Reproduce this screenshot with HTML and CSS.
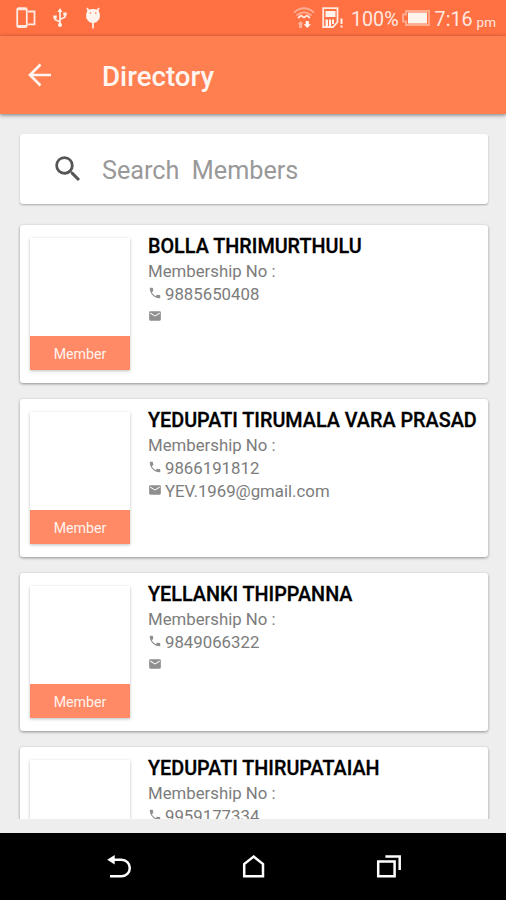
FILE: index.html
```
<!DOCTYPE html>
<html lang="en">
<head>
    <meta charset="UTF-8">
    <meta name="viewport" content="width=device-width, initial-scale=1.0">
    <title>Directory</title>
    <link rel="stylesheet" href="styles.css">
</head>
<body>

<!-- shared icons -->
<svg class="sprite" width="0" height="0">
    <symbol id="phone" viewBox="0 0 24 24">
        <path d="M6.62 10.79c1.44 2.83 3.76 5.14 6.59 6.59l2.2-2.2c.27-.27.67-.36 1.02-.24 1.12.37 2.33.57 3.57.57.55 0 1 .45 1 1V20c0 .55-.45 1-1 1C10.61 21 3 13.39 3 4c0-.55.45-1 1-1h3.5c.55 0 1 .45 1 1 0 1.25.2 2.45.57 3.57.11.35.03.74-.25 1.02z"/>
    </symbol>
    <symbol id="mail" viewBox="0 0 24 24">
        <path d="M20 4H4c-1.1 0-2 .9-2 2v12c0 1.1.9 2 2 2h16c1.1 0 2-.9 2-2V6c0-1.1-.9-2-2-2zm0 4l-8 5-8-5V6l8 5 8-5z"/>
    </symbol>
</svg>

<div class="statusbar">
    <div class="notifications">
        <svg class="icon-devices" width="20" height="22" viewBox="0 0 20 22">
            <rect x="1.2" y="1.2" width="9.6" height="19" rx="1.5"/>
            <path d="M1.5 2.4h9M1.5 19h9M12 4.5h6.5v12.8H12"/>
        </svg>
        <svg class="icon-usb" width="16" height="20" viewBox="0 0 16 20">
            <path d="M8 3v14M8 14L3 11.5V9M8 11.5l5-2.5V6"/>
            <path class="solid" d="M8 0l2.5 4h-5zM1.3 7.5h3.4v3H1.3zM11.3 4.5h3.4v3h-3.4z"/>
            <circle class="solid" cx="8" cy="17" r="2"/>
        </svg>
        <svg class="icon-bug" width="16" height="23" viewBox="0 0 16 23">
            <path d="M3.5 3.5L2 1M12.5 3.5L14 1M8 14v7.5"/>
            <path class="solid" d="M3 3q5-2 10 0 3 4 1.5 8.5Q12 16 8 16t-6.5-4.5Q0 7 3 3z"/>
            <circle class="eye" cx="5.3" cy="6" r=".8"/>
            <circle class="eye" cx="10.7" cy="6" r=".8"/>
        </svg>
    </div>
    <div class="system">
        <svg class="icon-wifi" width="22" height="24" viewBox="0 0 22 24">
            <path class="faint" d="M1 6.5Q11-2 21 6.5"/>
            <path class="faint" d="M3.5 9.5Q11 3 18.5 9.5"/>
            <path d="M5 12l3-2.5 3 2 3-2 3 2.5"/>
            <path class="faint solid" d="M7.5 15l3 3.3H9V22H6v-3.7H4.5z"/>
            <path class="solid" d="M12.7 15h3.2v3.3H18L14.3 22l-3.7-3.7h2.1z"/>
        </svg>
        <svg class="icon-sim" width="22" height="22" viewBox="0 0 22 22">
            <path d="M1.2 1.2h14.3V15l-4.5 5H1.2z"/>
            <path class="solid" d="M3.5 4h10v6h-10zM3.5 12.5H6V19H3.5zM7 12.5h2V19H7zM10 12.5h2V17h-2zM18.5 11.5h2V17h-2zM18.5 18.5h2v2h-2z"/>
        </svg>
        <span class="percent">100%</span>
        <svg class="icon-battery" width="28" height="16" viewBox="0 0 28 16">
            <path class="faint" d="M4 1h23v14H4v-3.5H1v-7h3z"/>
            <path class="solid" d="M6 2.5h19v11H6z"/>
        </svg>
        <span class="time">7:16</span>
        <span class="pm">pm</span>
    </div>
</div>

<header class="toolbar">
    <svg class="back" width="24" height="24" viewBox="0 0 24 24">
        <path d="M23 12H2.5M12.5 1.5L2 12l10.5 10.5"/>
    </svg>
    <h1>Directory</h1>
</header>

<main>
    <div class="search">
        <svg width="34" height="34" viewBox="0 0 24 24">
            <path d="M15.5 14h-.79l-.28-.27A6.471 6.471 0 0 0 16 9.5 6.5 6.5 0 1 0 9.5 16c1.61 0 3.09-.59 4.23-1.57l.27.28v.79l5 4.99L20.49 19l-4.99-5zm-6 0C7.01 14 5 11.99 5 9.5S7.01 5 9.5 5 14 7.01 14 9.5 11.99 14 9.5 14z"/>
        </svg>
        <span>Search&nbsp; Members</span>
    </div>

    <div class="list">
        <div class="card">
            <div class="photo"><span>Member</span></div>
            <div class="info">
                <h2>BOLLA THRIMURTHULU</h2>
                <p>Membership No :</p>
                <p><svg><use href="#phone"/></svg>9885650408</p>
                <p><svg><use href="#mail"/></svg></p>
            </div>
        </div>
        <div class="card">
            <div class="photo"><span>Member</span></div>
            <div class="info">
                <h2>YEDUPATI TIRUMALA VARA PRASAD</h2>
                <p>Membership No :</p>
                <p><svg><use href="#phone"/></svg>9866191812</p>
                <p><svg><use href="#mail"/></svg>YEV.1969@gmail.com</p>
            </div>
        </div>
        <div class="card">
            <div class="photo"><span>Member</span></div>
            <div class="info">
                <h2>YELLANKI THIPPANNA</h2>
                <p>Membership No :</p>
                <p><svg><use href="#phone"/></svg>9849066322</p>
                <p><svg><use href="#mail"/></svg></p>
            </div>
        </div>
        <div class="card">
            <div class="photo"></div>
            <div class="info">
                <h2>YEDUPATI THIRUPATAIAH</h2>
                <p>Membership No :</p>
                <p><svg><use href="#phone"/></svg>9959177334</p>
            </div>
        </div>
    </div>
</main>

<nav class="navbar">
    <svg width="28" height="27" viewBox="0 0 28 27">
        <path d="M7 6.7h9.5a8.3 8.3 0 0 1 0 16.6H5"/>
        <path class="solid" d="M2.2 6.7L9.7 2v9.4z"/>
    </svg>
    <svg width="28" height="27" viewBox="0 0 28 27">
        <path d="M4.2 23.3V11l9.5-7.4L23 11v12.3z"/>
    </svg>
    <svg width="28" height="27" viewBox="0 0 28 27">
        <path d="M3.2 8.5h16.4v14.8H3.2zM10.4 3.4h14.3v13.7"/>
    </svg>
</nav>

</body>
</html>
```
FILE: styles.css
```
* {
    box-sizing: border-box;
}

body {
    margin: 0;
    height: 900px;
    display: flex;
    flex-direction: column;
    overflow: hidden;
    background-color: #eeeeee;
    font-family: Roboto, sans-serif;
}

h1, h2, p {
    margin: 0;
}

svg {
    flex: none;
}

.sprite {
    display: none;
}

.statusbar {
    flex: none;
    height: 36px;
    display: flex;
    justify-content: space-between;
    background-color: #ff7043;
    color: #ffe9e0;
}

.statusbar svg {
    fill: none;
    stroke: #ffe9e0;
    stroke-width: 1.8;
}

.statusbar .solid {
    fill: #fff3ee;
    stroke: none;
}

.statusbar .eye {
    fill: #ff7043;
    stroke: none;
}

.statusbar .faint {
    opacity: 0.5;
}

.notifications, .system {
    display: flex;
    align-items: center;
}

.notifications {
    padding-left: 16px;
}

.icon-usb {
    margin-left: 16px;
}

.icon-bug {
    margin-left: 17px;
}

.system {
    padding-right: 10px;
    font-size: 19.7px;
}

.icon-sim {
    margin-left: 7px;
}

.percent {
    margin-left: 7px;
    padding-top: 3px;
}

.icon-battery {
    margin-left: 3px;
}

.time {
    margin-left: 5px;
    padding-top: 3px;
}

.pm {
    margin-left: 4px;
    padding-top: 7px;
    font-size: 13.5px;
}

.toolbar {
    flex: none;
    height: 78px;
    display: flex;
    align-items: center;
    padding-left: 28px;
    background-color: #ff7f50;
    box-shadow: 0 1px 4px rgba(0, 0, 0, 0.5);
    color: #fff5f0;
}

.toolbar h1 {
    margin-left: 50px;
    padding-top: 3px;
    font-size: 27.7px;
    font-weight: 500;
}

.back {
    fill: none;
    stroke: #fff5f0;
    stroke-width: 2.7;
}

main {
    flex: 1;
    min-height: 0;
    display: flex;
    flex-direction: column;
    padding: 20px 14px 14px;
}

.search {
    flex: none;
    height: 70px;
    display: flex;
    align-items: center;
    margin: 0 4px 0 6px;
    padding-left: 31px;
    background-color: #fff;
    border-radius: 3px;
    box-shadow: 0 1px 2px rgba(0, 0, 0, 0.3);
    color: #999;
    font-size: 25.2px;
}

.search svg {
    fill: #555;
}

.search span {
    margin-left: 17px;
    padding-top: 3px;
}

.list {
    flex: 1;
    min-height: 0;
    margin-top: 15px;
    padding: 6px 4px 0 6px;
    overflow: hidden;
}

.card {
    height: 158px;
    margin-bottom: 16px;
    display: flex;
    padding: 13px 10px;
    background-color: #fff;
    border-radius: 3px;
    box-shadow: 0 1px 3px rgba(0, 0, 0, 0.4);
}

.photo {
    flex: none;
    width: 100px;
    height: 132px;
    display: flex;
    align-items: flex-end;
    box-shadow: 0 1px 3px rgba(0, 0, 0, 0.25);
}

.photo span {
    flex: 1;
    height: 34px;
    line-height: 36px;
    background-color: #ff8a65;
    color: #fff3ee;
    font-size: 14.2px;
    text-align: center;
}

.info {
    margin-left: 18px;
    margin-top: -5px;
    white-space: nowrap;
}

.info h2 {
    height: 27px;
    line-height: 28px;
    color: #000;
    font-size: 19.8px;
    font-weight: 500;
    -webkit-text-stroke: 0.3px #000;
}

.info p {
    height: 22.7px;
    display: flex;
    align-items: center;
    color: #7c7c7c;
    font-size: 16.8px;
}

.info svg {
    width: 14px;
    height: 14px;
    margin: -2px 3px 0 0;
    fill: #8f8f8f;
}

.navbar {
    flex: none;
    height: 67px;
    display: flex;
    align-items: center;
    justify-content: center;
    gap: 107px;
    padding-left: 2px;
    background-color: #000;
}

.navbar svg {
    fill: none;
    stroke: #fff;
    stroke-width: 2.5;
}

.navbar .solid {
    fill: #fff;
    stroke: none;
}
```
